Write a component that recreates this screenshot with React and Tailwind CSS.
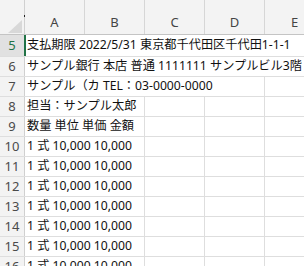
import React from "react";

const cols = ["A", "B", "C", "D", "E"];

const rows = [
  { n: 5, text: "支払期限 2022/5/31 東京都千代田区千代田1-1-1", span: 5, h: "h-[22px]", active: true },
  { n: 6, text: "サンプル銀行 本店 普通 1111111 サンプルビル3階", span: 5 },
  { n: 7, text: "サンプル（カ TEL：03-0000-0000", span: 4 },
  { n: 8, text: "担当：サンプル太郎", span: 2 },
  { n: 9, text: "数量 単位 単価 金額", span: 2 },
  { n: 10, text: "1 式 10,000 10,000", span: 2 },
  { n: 11, text: "1 式 10,000 10,000", span: 2 },
  { n: 12, text: "1 式 10,000 10,000", span: 2 },
  { n: 13, text: "1 式 10,000 10,000", span: 2 },
  { n: 14, text: "1 式 10,000 10,000", span: 2 },
  { n: 15, text: "1 式 10,000 10,000", span: 2 },
  { n: 16, text: "1 式 10,000 10,000", span: 2 },
];

const spanWidth = {
  2: "w-[120px]",
  4: "w-[240px]",
  5: "w-[300px]",
};

function Row({ n, text, span, h = "h-[20px]", active }) {
  const rest = cols.slice(span);
  return (
    <div className={`flex ${h} border-b border-[#dedede] shrink-0`}>
      <div
        className={`relative w-[25px] shrink-0 flex items-center justify-center border-r border-[#d0d0d0] text-[13px] ${
          active ? "bg-[#e1e1e1] text-[#217346]" : "bg-[#f3f3f3] text-[#4a4a4a]"
        }`}
      >
        {n}
        {active && <div className="absolute right-[-2px] top-0 bottom-0 w-[2px] bg-[#217346]" />}
      </div>
      <div className={`${spanWidth[span]} shrink-0 flex items-center pl-[2px] border-r border-[#dedede] whitespace-nowrap overflow-hidden text-[12.2px] text-[#111]`}>
        {text}
      </div>
      {rest.map((c) => (
        <div key={c} className="w-[60px] shrink-0 border-r border-[#dedede]" />
      ))}
    </div>
  );
}

export default function App() {
  return (
    <div
      className="w-[304px] h-[266px] overflow-hidden bg-white flex flex-col"
      style={{ fontFamily: '"Noto Sans", "Noto Sans CJK JP", sans-serif' }}
    >
      <div className="flex h-[35px] shrink-0 bg-[#f3f3f3] border-b border-[#c4c4c4]">
        <div className="relative w-[25px] shrink-0 border-r border-[#d0d0d0]">
          <svg className="absolute left-[8px] top-[20px]" width="14" height="13" viewBox="0 0 14 13">
            <polygon points="14,0 14,13 0,13" fill="#d8d8d8" />
          </svg>
          <div className="absolute right-[-1px] top-[15px] w-[1px] h-[2px] bg-[#222]" />
        </div>
        {cols.map((c) => (
          <div
            key={c}
            className="w-[60px] shrink-0 flex items-end justify-center pb-[2px] border-r border-[#d6d6d6] text-[13px] text-[#444]"
          >
            {c}
          </div>
        ))}
      </div>
      {rows.map((r) => (
        <Row key={r.n} {...r} />
      ))}
    </div>
  );
}
